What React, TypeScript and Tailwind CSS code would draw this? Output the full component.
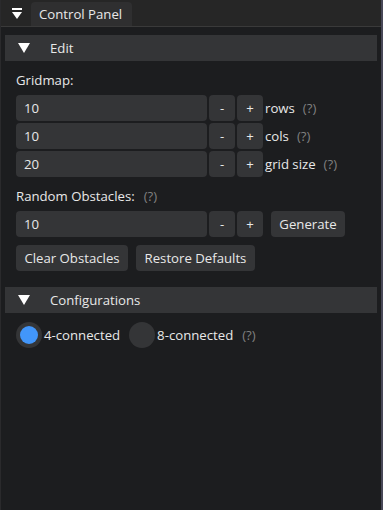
import React from "react";

const font = { fontFamily: '"Open Sans", "Noto Sans", sans-serif' };

function Tri() {
  return (
    <svg width="12" height="10" viewBox="0 0 12 10" className="shrink-0">
      <polygon points="0,0 12,0 6,10" fill="#ffffff" />
    </svg>
  );
}

function Header({ label }: { label: string }) {
  return (
    <div className="h-[26px] bg-[#343537] flex items-center pl-[13px] text-[13.2px] text-[#e8e8e8]">
      <Tri />
      <span className="ml-[20px] h-[26px] flex items-center pt-[2px]">{label}</span>
    </div>
  );
}

function Stepper({ value }: { value: string }) {
  return (
    <>
      <div className="w-[191px] h-[26px] rounded-[4px] bg-[#343537] flex items-center pl-[8px] pt-[2px] text-[13.2px] text-[#e8e8e8]">
        {value}
      </div>
      <div className="ml-[2px] w-[26px] h-[26px] rounded-[4px] bg-[#343537] flex items-center justify-center pt-[2px] text-[13.2px] text-[#e8e8e8]">
        -
      </div>
      <div className="ml-[2px] w-[26px] h-[26px] rounded-[4px] bg-[#343537] flex items-center justify-center pt-[2px] text-[13.2px] text-[#e8e8e8]">
        +
      </div>
    </>
  );
}

function Row({ value, label }: { value: string; label: string }) {
  return (
    <div className="flex items-center h-[26px]">
      <Stepper value={value} />
      <span className="ml-[2px] h-[26px] flex items-center pt-[2px] text-[13.2px] text-[#e8e8e8]">{label}</span>
      <span className="ml-[8px] h-[26px] flex items-center pt-[2px] text-[13.2px] text-[#808080]">(?)</span>
    </div>
  );
}

function Btn({ label, className }: { label: string; className?: string }) {
  return (
    <div
      className={
        "h-[26px] rounded-[4px] bg-[#343537] flex items-center justify-center pt-[2px] text-[13.2px] text-[#e8e8e8] " +
        (className || "")
      }
    >
      {label}
    </div>
  );
}

export default function App() {
  return (
    <div
      style={font}
      className="w-[383px] h-[510px] bg-[#1c1d1f] flex flex-col border-l border-l-[#2a2a2c] border-r-2 border-r-[#474757] leading-none"
    >
      <div className="h-[27px] bg-[#262626] border-b border-b-[#3a3a3a] flex items-end shrink-0">
        <div className="w-[30px] h-[26px] flex flex-col items-center justify-center pl-[2px]">
          <div className="w-[10px] h-[2px] bg-white mb-[2px]" />
          <svg width="10" height="7" viewBox="0 0 10 7">
            <polygon points="0,0 10,0 5,7" fill="#ffffff" />
          </svg>
        </div>
        <div className="w-[101px] h-[24px] bg-[#2f2f30] rounded-t-[4px] flex items-center pl-[8px] pt-[1px] text-[13.2px] text-[#e8e8e8]">
          Control Panel
        </div>
      </div>
      <div className="flex flex-col px-[4px] pt-[8px]">
        <Header label="Edit" />
        <div className="flex flex-col pl-[11px] pt-[6px]">
          <div className="h-[26px] flex items-center pt-[2px] text-[13.2px] text-[#e8e8e8]">Gridmap:</div>
          <div className="flex flex-col gap-[2px] mt-[2px]">
            <Row value="10" label="rows" />
            <Row value="10" label="cols" />
            <Row value="20" label="grid size" />
          </div>
          <div className="h-[26px] flex items-center pt-[2px] text-[13.2px] text-[#e8e8e8] mt-[6px]">
            Random Obstacles:
            <span className="ml-[9px] text-[#808080]">(?)</span>
          </div>
          <div className="flex items-center h-[26px] mt-[2px]">
            <Stepper value="10" />
            <Btn label="Generate" className="ml-[8px] w-[74px]" />
          </div>
          <div className="flex items-center gap-[8px] mt-[8px]">
            <Btn label="Clear Obstacles" className="w-[112px]" />
            <Btn label="Restore Defaults" className="w-[119px]" />
          </div>
        </div>
        <div className="mt-[16px]">
          <Header label="Configurations" />
        </div>
        <div className="flex items-center pl-[11px] mt-[9px] h-[26px] text-[13.2px] text-[#e8e8e8]">
          <div className="w-[26px] h-[26px] rounded-full bg-[#343537] flex items-center justify-center">
            <div className="w-[18px] h-[18px] rounded-full bg-[#4296fa]" />
          </div>
          <span className="ml-[2px] h-[26px] flex items-center pt-[2px]">4-connected</span>
          <div className="ml-[9px] w-[26px] h-[26px] rounded-full bg-[#343537]" />
          <span className="ml-[2px] h-[26px] flex items-center pt-[2px]">8-connected</span>
          <span className="ml-[9px] h-[26px] flex items-center pt-[2px] text-[#808080]">(?)</span>
        </div>
      </div>
    </div>
  );
}
